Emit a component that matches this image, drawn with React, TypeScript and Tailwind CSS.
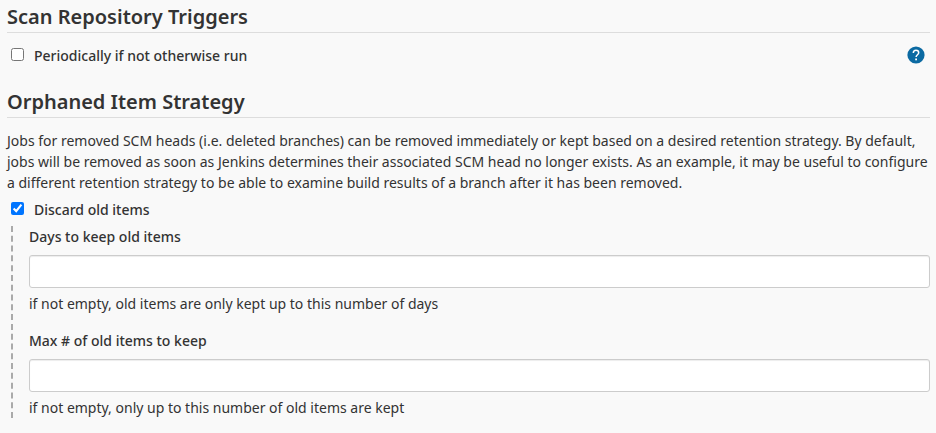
import React from "react";

function Section({ title, children }: { title: string; children: React.ReactNode }) {
  return (
    <section>
      <h2 className="border-b border-[#dddddd] pt-0.5 text-xl leading-[30px] font-semibold">{title}</h2>
      {children}
    </section>
  );
}

function Check({ id, label, checked }: { id: string; label: string; checked?: boolean }) {
  return (
    <div className="flex items-start gap-2.5 pl-1">
      <input id={id} type="checkbox" defaultChecked={checked} className="mt-[3px] size-[13px]" />
      <label htmlFor={id} className="font-medium">{label}</label>
    </div>
  );
}

function Field({ id, label, hint }: { id: string; label: string; hint: string }) {
  return (
    <div>
      <label htmlFor={id} className="block font-medium">{label}</label>
      <input
        id={id}
        type="text"
        aria-describedby={id + "-hint"}
        className="mt-2 block h-[33px] w-full rounded-[3px] border border-[#cccccc] bg-white px-2 shadow-[inset_0_1px_1px_rgba(0,0,0,0.075)]"
      />
      <p id={id + "-hint"} className="mt-[5px]">{hint}</p>
    </div>
  );
}

export default function App() {
  return (
    <main className="min-h-screen bg-[#f9f9f9] pr-1.5 pl-[7px] font-['Noto_Sans',sans-serif] text-sm leading-[21px] text-[#333333]">
      <Section title="Scan Repository Triggers">
        <div className="mt-3 flex items-start justify-between">
          <Check id="periodic" label="Periodically if not otherwise run" />
          <button type="button" aria-label="Help" className="mt-px mr-[5px]">
            <svg viewBox="0 0 18 18" className="block size-[18px]">
              <circle cx="9" cy="9" r="8.6" fill="#0b6aa2" />
              <path d="M6.3 7C6.3 5.3 7.5 4.2 9 4.2s2.7 1 2.7 2.5c0 2-2.6 2.1-2.6 4.4" fill="none" stroke="#fff" strokeWidth="1.5" />
              <rect x="8.2" y="12.5" width="1.8" height="1.8" fill="#fff" />
            </svg>
          </button>
        </div>
      </Section>
      <div className="mt-[19px]">
        <Section title="Orphaned Item Strategy">
          <p className="mt-3">
            Jobs for removed SCM heads (i.e. deleted branches) can be removed immediately or kept based on a desired
            retention strategy. By default, jobs will be removed as soon as Jenkins determines their associated SCM head
            no longer exists. As an example, it may be useful to configure a different retention strategy to be able to
            examine build results of a branch after it has been removed.
          </p>
          <div className="mt-1.5">
            <Check id="discard" label="Discard old items" checked />
          </div>
          <div className="mt-1.5 ml-1 flex flex-col gap-4 border-l-2 border-dashed border-[#aaaaaa] pl-4">
            <Field id="days" label="Days to keep old items" hint="if not empty, old items are only kept up to this number of days" />
            <Field id="max" label="Max # of old items to keep" hint="if not empty, only up to this number of old items are kept" />
          </div>
        </Section>
      </div>
    </main>
  );
}
